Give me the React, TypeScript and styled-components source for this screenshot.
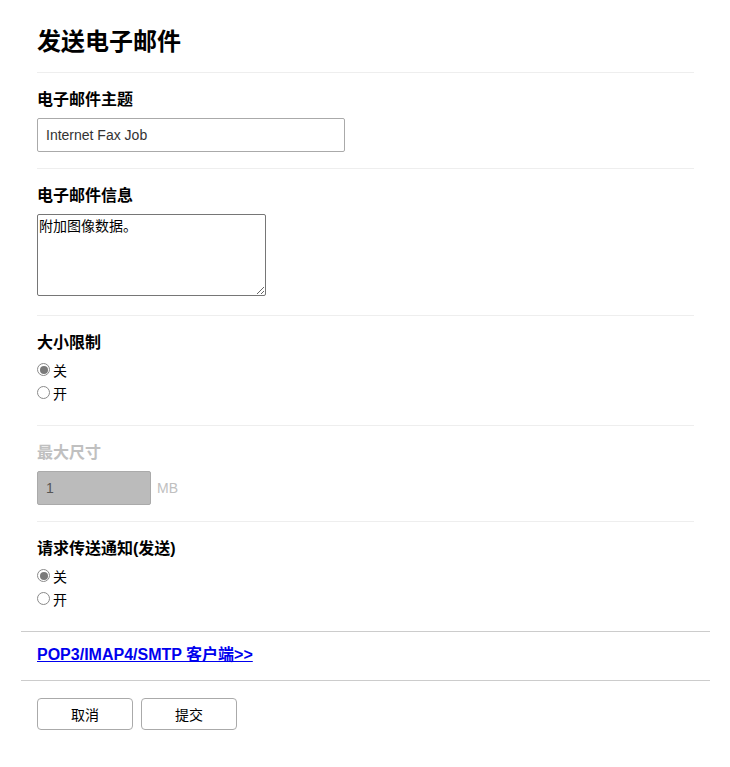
import styled, { createGlobalStyle } from "styled-components"

const GlobalStyle = createGlobalStyle`
  body {
    margin: 0;
    background: #fff;
    font-family: "Liberation Sans", "Noto Sans CJK SC", sans-serif;
    color: #000;
  }
`

const Page = styled.div`
  width: 689px;
  margin-left: 21px;
`
const Inner = styled.div`
  padding: 0 16px;
`
const Title = styled.h1`
  margin: 0;
  padding: 26px 0 14px;
  font-size: 24px;
  line-height: 32px;
  font-weight: bold;
  border-bottom: 1px solid #eee;
`
const Section = styled.div<{ $last?: boolean }>`
  padding: 15px 0 16px;
  border-bottom: ${(p) => (p.$last ? "none" : "1px solid #eee")};
`
const Label = styled.div<{ $disabled?: boolean; $tight?: boolean }>`
  font-size: 16px;
  line-height: 24px;
  font-weight: bold;
  color: ${(p) => (p.$disabled ? "#c0c0c0" : "#000")};
  margin-bottom: ${(p) => (p.$tight ? "3px" : "6px")};
`
const TextInput = styled.input`
  display: block;
  box-sizing: border-box;
  width: ${(p) => p.width ?? 308}px;
  height: 34px;
  padding: 0 8px;
  border: 1px solid #aaa;
  border-radius: 2px;
  font-family: "Liberation Sans", sans-serif;
  font-size: 14px;
  color: #333;
  background: #fff;
  outline: none;

  &:disabled {
    background: #bbb;
    color: #555;
    border-color: #aaa;
  }
`
const TextArea = styled.textarea`
  display: block;
  box-sizing: border-box;
  width: 229px;
  height: 82px;
  margin-bottom: 3px;
  padding: 1px 1px;
  border: 1px solid #767676;
  border-radius: 2px;
  font-family: "Noto Sans CJK SC", sans-serif;
  font-size: 14px;
  line-height: 18px;
  color: #000;
  resize: both;
`
const InputRow = styled.div`
  display: flex;
  align-items: center;
  gap: 6px;
`
const Unit = styled.span`
  font-size: 14px;
  color: #c0c0c0;
`
const RadioGroup = styled.div`
  display: flex;
  flex-direction: column;
  margin-bottom: 5px;
`
const RadioRow = styled.label`
  display: flex;
  align-items: center;
  height: 23px;
  font-size: 14px;
  font-family: "Noto Sans CJK SC", sans-serif;
`
const Radio = styled.input`
  appearance: none;
  box-sizing: border-box;
  width: 13px;
  height: 13px;
  margin: 0 3px 0 0;
  border: 1px solid #8a8a8a;
  border-radius: 50%;
  background: #fff;
  display: grid;
  place-items: center;

  &:checked::after {
    content: "";
    width: 8px;
    height: 8px;
    border-radius: 50%;
    background: #7a7a7a;
  }
`
const LinkBar = styled.div`
  border-top: 1px solid #ccc;
  border-bottom: 1px solid #ccc;
  padding: 13px 16px 15px;
`
const Link = styled.a`
  font-size: 16px;
  line-height: 20px;
  font-weight: bold;
  color: #0000ee;
  text-decoration: underline;
`
const Buttons = styled.div`
  display: flex;
  gap: 8px;
  padding: 17px 16px;
`
const Button = styled.button`
  width: 96px;
  height: 32px;
  background: #fff;
  border: 1px solid #aaa;
  border-radius: 4px;
  font-family: "Noto Sans CJK SC", sans-serif;
  font-size: 14px;
  color: #000;
`

function RadioChoice({ name }: { name: string }) {
  return (
    <RadioGroup>
      <RadioRow>
        <Radio type="radio" name={name} defaultChecked />关
      </RadioRow>
      <RadioRow>
        <Radio type="radio" name={name} />开
      </RadioRow>
    </RadioGroup>
  )
}

export default function App() {
  return (
    <Page>
      <GlobalStyle />
      <Inner>
        <Title>发送电子邮件</Title>
        <Section>
          <Label>电子邮件主题</Label>
          <TextInput defaultValue="Internet Fax Job" />
        </Section>
        <Section>
          <Label>电子邮件信息</Label>
          <TextArea defaultValue="附加图像数据。" />
        </Section>
        <Section>
          <Label $tight>大小限制</Label>
          <RadioChoice name="size" />
        </Section>
        <Section>
          <Label $disabled>最大尺寸</Label>
          <InputRow>
            <TextInput width={114} defaultValue="1" disabled />
            <Unit>MB</Unit>
          </InputRow>
        </Section>
        <Section $last>
          <Label $tight>请求传送通知(发送)</Label>
          <RadioChoice name="notify" />
        </Section>
      </Inner>
      <LinkBar>
        <Link href="#">POP3/IMAP4/SMTP 客户端&gt;&gt;</Link>
      </LinkBar>
      <Buttons>
        <Button>取消</Button>
        <Button>提交</Button>
      </Buttons>
    </Page>
  )
}
